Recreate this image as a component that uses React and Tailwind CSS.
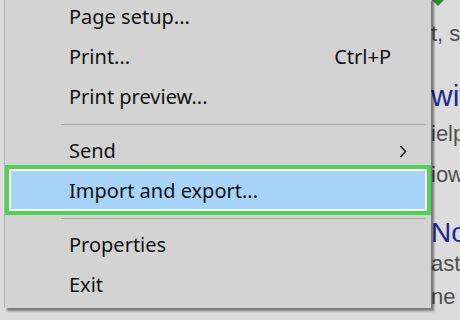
import React from "react";

const menuFont = { fontFamily: '"Noto Sans", "Open Sans", sans-serif' };

const MenuItem = ({ label, shortcut, submenu, highlighted }) => (
  <div className="relative flex items-center h-[40px] pl-[64px] pr-[40px] text-[20px] text-[#111111]">
    {highlighted && (
      <div className="absolute left-0 right-0 -top-[6px] -bottom-[4px] border-[4px] border-[#4bd64d] bg-[#a7d3f8] shadow-[inset_0_0_0_2px_#ffffff]" />
    )}
    <span className="relative flex-1">{label}</span>
    {shortcut && <span className="relative">{shortcut}</span>}
    {submenu && (
      <svg className="relative -mr-[16px]" width="8" height="13" viewBox="0 0 8 13">
        <polyline points="1.5,1 6.5,6.5 1.5,12" fill="none" stroke="#222" strokeWidth="1.6" />
      </svg>
    )}
  </div>
);

const Separator = () => (
  <div className="flex items-center h-[14px] pl-[56px] pr-[6px]">
    <div className="w-full border-t border-[#a9a9a9]" />
  </div>
);

export default function App() {
  return (
    <div className="relative w-[460px] h-[320px] overflow-hidden bg-[#dcdcdc]">
      {/* page behind the menu */}
      <div
        className="ml-[431px] overflow-hidden whitespace-nowrap text-[#505050]"
        style={{ fontFamily: '"Liberation Sans", Arial, sans-serif' }}
      >
        <div className="h-[22px]">
          <svg width="14" height="8" viewBox="0 0 14 8" className="ml-[1px]">
            <polygon points="0,0 12,0 6,6" fill="#2f8a35" />
          </svg>
        </div>
        <div className="h-[24px] leading-[24px] text-[22px]">t, s</div>
        <div className="mt-[34px] h-[32px] leading-[32px] text-[30px] text-[#1d2a8e]">wit</div>
        <div className="mt-[10px] h-[24px] leading-[24px] text-[22px]">ielp</div>
        <div className="mt-[17px] h-[24px] leading-[24px] text-[22px]">iow</div>
        <div className="mt-[30px] h-[32px] leading-[32px] text-[28px] text-[#1d2a8e]">No</div>
        <div className="mt-[3px] h-[24px] leading-[24px] text-[22px]">ast</div>
        <div className="mt-[9px] h-[24px] leading-[24px] text-[22px]">ne</div>
      </div>

      {/* context menu */}
      <div
        className="absolute left-[4px] -top-[3px] w-[427px] pb-[3px] bg-[#d3d3d3] border-l border-[#b5b5b5] shadow-[3px_3px_2px_rgba(0,0,0,0.45)]"
        style={menuFont}
      >
        <MenuItem label="Page setup..." />
        <MenuItem label="Print..." shortcut="Ctrl+P" />
        <MenuItem label="Print preview..." />
        <Separator />
        <MenuItem label="Send" submenu />
        <MenuItem label="Import and export..." highlighted />
        <Separator />
        <MenuItem label="Properties" />
        <MenuItem label="Exit" />
      </div>
    </div>
  );
}
